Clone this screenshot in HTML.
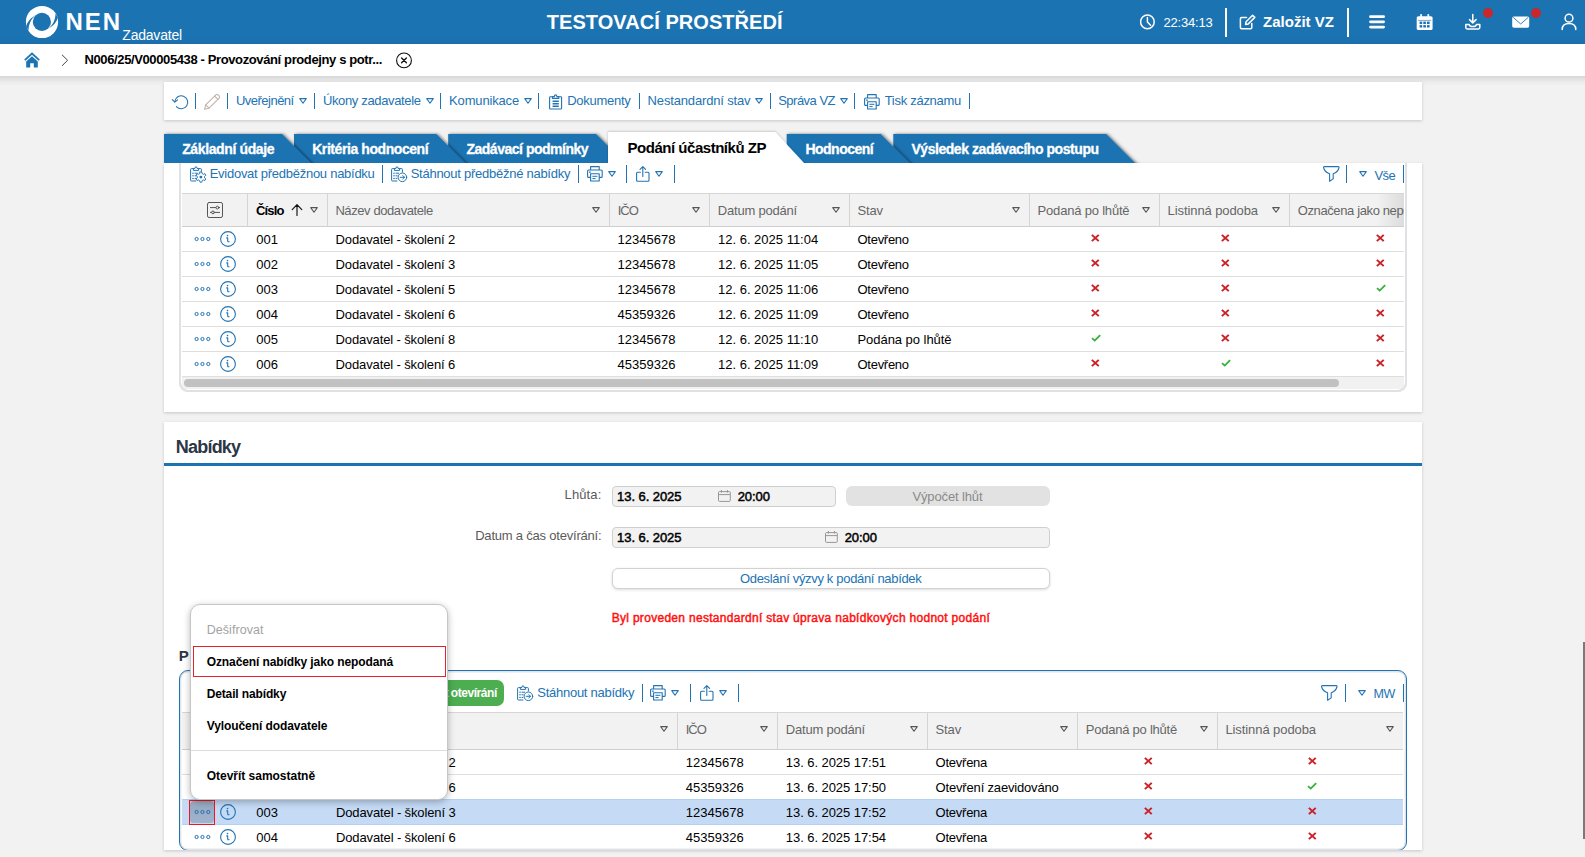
<!DOCTYPE html>
<html lang="cs">
<head>
<meta charset="utf-8">
<title>NEN</title>
<style>
*{box-sizing:border-box;margin:0;padding:0}
html,body{width:1585px;height:857px;overflow:hidden;background:#f2f2f2;font-family:"Liberation Sans",sans-serif;font-size:13px;color:#000}
.abs{position:absolute}
.t{position:absolute;white-space:pre;line-height:1}
svg{position:absolute;overflow:visible}
/* header */
#hdr{position:absolute;left:0;top:0;width:1585px;height:44px;background:#1c73b2;color:#fff}
#crumb{position:absolute;left:-30px;top:44px;width:1645px;height:32px;background:#fff;box-shadow:0 2px 8px rgba(0,0,0,.17)}
.card{position:absolute;left:164px;width:1258px;background:#fff;box-shadow:0 1px 3px rgba(0,0,0,.18)}
.lnk{color:#2273b3}
.sep{position:absolute;width:1px;background:#2273b3}
/*STYLE-MORE*/
</style>
</head>
<body>
<svg width="0" height="0" style="left:-10px;top:-10px">
<defs>

<symbol id="tri" viewBox="0 0 8 6" overflow="visible"><path d="M.7 .6H7.3L4 5.3Z" fill="none" stroke="currentColor" stroke-width="1.05" stroke-linejoin="round"/></symbol>
<symbol id="xm" viewBox="0 0 10 10" overflow="visible"><path d="M1 1L9 9M9 1L1 9" fill="none" stroke="#cb2128" stroke-width="2.3" stroke-linecap="butt"/></symbol>
<symbol id="ck" viewBox="0 0 12 10" overflow="visible"><path d="M1.2 5.4L4.4 8.5L10.8 1.4" fill="none" stroke="#35b139" stroke-width="2.1" stroke-linecap="butt" stroke-linejoin="miter"/></symbol>
<symbol id="ooo" viewBox="0 0 17 6" overflow="visible"><g fill="none" stroke="#2273b3" stroke-width="1"><circle cx="2.6" cy="3" r="1.6"/><circle cx="8.45" cy="3" r="1.6"/><circle cx="14.3" cy="3" r="1.6"/></g></symbol>
<symbol id="inf" viewBox="0 0 16 16" overflow="visible"><circle cx="8" cy="8" r="7.4" fill="none" stroke="#2273b3" stroke-width="1.1"/><path d="M6.7 6.9H7.7V9.9Q7.8 11 9.1 10.7" fill="none" stroke="#2273b3" stroke-width="1.1" stroke-linecap="round" stroke-linejoin="round"/><circle cx="7.5" cy="4.6" r=".8" fill="#2273b3"/></symbol>

</defs>
</svg>

<!-- ============ HEADER ============ -->
<div id="hdr">

<!-- logo -->
<svg style="left:26px;top:6px" width="32" height="32" viewBox="26 6 32 32">
  <circle cx="42" cy="22" r="16.1" fill="#fff"/>
  <circle cx="41.9" cy="21.9" r="9.1" fill="#1c73b2"/>
  <path d="M35.2 15.6 Q28.2 19.5 26.1 26.2 L28.4 30.4 Q28.6 21.5 35.2 15.6Z" fill="#1c73b2"/>
  <path d="M48.8 28.4 Q55.8 24.5 57.9 17.8 L55.6 13.6 Q55.4 22.5 48.8 28.4Z" fill="#1c73b2"/>
</svg>
<span class="t" style="left:65.5px;top:9.7px;font-size:24px;font-weight:700;letter-spacing:2px">NEN</span>
<span class="t" style="left:122.3px;top:27.8px;font-size:14px;letter-spacing:-.21px">Zadavatel</span>
<span class="t" style="left:546.8px;top:12.3px;font-size:20px;font-weight:700;letter-spacing:.05px">TESTOVACÍ PROSTŘEDÍ</span>
<!-- clock -->
<svg style="left:1139px;top:13px" width="18" height="18" viewBox="1139 13 18 18" fill="none" stroke="#fff" stroke-width="1.5" stroke-linecap="round" stroke-linejoin="round">
  <circle cx="1147.4" cy="21.9" r="6.8"/>
  <path d="M1147.4 17.6V22L1150.6 25.2"/>
</svg>
<span class="t" style="left:1163.4px;top:15.8px;font-size:13px;letter-spacing:-.17px">22:34:13</span>
<div class="abs" style="left:1225px;top:8px;width:2px;height:28.5px;background:#fff"></div>
<!-- edit -->
<svg style="left:1238px;top:13px" width="20" height="18" viewBox="1238 13 20 18" fill="none" stroke="#fff" stroke-width="1.5" stroke-linecap="round" stroke-linejoin="round">
  <path d="M1246.5 17.6H1241.6Q1240.4 17.6 1240.4 18.8V27.6Q1240.4 28.8 1241.6 28.8H1250.6Q1251.8 28.8 1251.8 27.6V23.4"/>
  <path d="M1252.6 15.2 L1254.8 17.4 L1248.3 23.9 L1245.6 24.4 L1246.1 21.7Z"/>
</svg>
<span class="t" style="left:1263px;top:14.1px;font-size:15px;font-weight:700;letter-spacing:.02px">Založit VZ</span>
<div class="abs" style="left:1347px;top:8px;width:2px;height:28.5px;background:#fff"></div>
<!-- hamburger -->
<svg style="left:1369px;top:14px" width="16" height="16" viewBox="1369 14 16 16" fill="none" stroke="#fff" stroke-width="2.8" stroke-linecap="round">
  <path d="M1370.5 16.7H1383.6M1370.5 21.8H1383.6M1370.5 27.1H1383.6"/>
</svg>
<!-- calendar -->
<svg style="left:1416px;top:13px" width="18" height="18" viewBox="1416 13 18 18">
  <rect x="1416.7" y="16.2" width="15.9" height="13.8" rx="1.6" fill="#fff"/>
  <rect x="1420.2" y="14" width="1.8" height="4.5" rx=".8" fill="#fff"/>
  <rect x="1427.4" y="14" width="1.8" height="4.5" rx=".8" fill="#fff"/>
  <rect x="1418.2" y="19.9" width="12.9" height="1.1" fill="#1c73b2" opacity=".55"/>
  <g fill="#1c73b2">
    <rect x="1419.6" y="21.6" width="2.6" height="2.4"/><rect x="1423.3" y="21.6" width="2.6" height="2.4"/><rect x="1427" y="21.6" width="2.6" height="2.4"/>
    <rect x="1419.6" y="25.1" width="2.6" height="2.4"/><rect x="1423.3" y="25.1" width="2.6" height="2.4"/><rect x="1427" y="25.1" width="2.6" height="2.4"/>
  </g>
</svg>
<!-- download -->
<svg style="left:1464px;top:13px" width="18" height="18" viewBox="1464 13 18 18" fill="none" stroke="#fff" stroke-width="1.5" stroke-linecap="round" stroke-linejoin="round">
  <path d="M1472.8 14.6V22.6M1469.5 19.6L1472.8 22.9L1476.1 19.6"/>
  <path d="M1465.8 24.6H1469.2Q1469.6 26.6 1472.8 26.6Q1476 26.6 1476.4 24.6H1479.8V27.6Q1479.8 29 1478.4 29H1467.2Q1465.8 29 1465.8 27.6Z"/>
</svg>
<div class="abs" style="left:1483px;top:7.9px;width:10px;height:10px;border-radius:50%;background:#c8282c"></div>
<!-- mail -->
<svg style="left:1512px;top:16px" width="18" height="13" viewBox="1512 16 18 13">
  <rect x="1512.2" y="16.4" width="17" height="11.3" rx="1.6" fill="#fff"/>
  <path d="M1513.2 17.4L1520.7 24L1528.2 17.4" fill="none" stroke="#1c73b2" stroke-width=".9"/>
</svg>
<div class="abs" style="left:1531px;top:7.9px;width:10px;height:10px;border-radius:50%;background:#c8282c"></div>
<!-- user -->
<svg style="left:1560px;top:13px" width="18" height="18" viewBox="1560 13 18 18" fill="none" stroke="#fff" stroke-width="1.5" stroke-linecap="round">
  <circle cx="1569" cy="18.2" r="3.9"/>
  <path d="M1562.2 29.4Q1562.2 23.4 1569 23.4Q1575.8 23.4 1575.8 29.4"/>
</svg>

</div>

<!-- ============ BREADCRUMB ============ -->
<div id="crumb">

<!-- home -->
<svg style="left:53px;top:7px" width="18" height="18" viewBox="23 51 18 18">
  <path d="M32 52.2L24.2 59.6L25.4 60.8L32 54.7L38.6 60.8L39.8 59.6Z" fill="#1c73b2"/>
  <path d="M32 56.2L26.2 61.6V67.6H30.2V63.2H33.8V67.6H37.8V61.6Z" fill="#1c73b2"/>
</svg>
<svg style="left:90px;top:9px" width="10" height="14" viewBox="60 53 10 14" fill="none" stroke="#444" stroke-width="1">
  <path d="M62 54.8L67.6 60.3L62 65.8"/>
</svg>
<span class="t" style="left:114.5px;top:9.2px;font-size:13px;font-weight:700;letter-spacing:-.38px">N006/25/V00005438 - Provozování prodejny s potr...</span>
<svg style="left:425px;top:7px" width="18" height="18" viewBox="395 51 18 18" fill="none" stroke="#111" stroke-width="1.1" stroke-linecap="round">
  <circle cx="404" cy="60.4" r="7.4"/>
  <path d="M401.6 58L406.4 62.8M406.4 58L401.6 62.8" stroke-width="1.3"/>
</svg>

</div>

<!-- CARD 1 -->
<div class="card" id="card1" style="top:82px;height:38.4px"></div>
<div class="abs" style="left:0;top:0">
<svg style="left:171px;top:93px" width="19" height="18" viewBox="171 93 19 18" fill="none" stroke="#2273b3" stroke-width="1.1" stroke-linecap="round" stroke-linejoin="round">
<path d="M174.8 101.6A6.5 6.5 0 1 1 176.4 106.6"/><path d="M172.3 99.6L174.8 102.2L177.6 99.8"/></svg>
<div class="abs" style="left:195px;top:92.8px;width:1px;height:16.6px;background:#2273b3"></div>
<svg style="left:203px;top:93px" width="19" height="18" viewBox="203 93 19 18" fill="none" stroke="#c2b4ab" stroke-width="1.1" stroke-linecap="round" stroke-linejoin="round">
<path d="M204.6 109.2L205.7 104.9L215.9 94.8Q217 93.9 218.1 94.9L219.2 96Q220.2 97.1 219.2 98.2L209 108.2Z"/><path d="M205.7 104.9L209 108.2M214.6 96.1L217.9 99.4"/></svg>
<div class="abs" style="left:227px;top:92.8px;width:1px;height:16.6px;background:#2273b3"></div>
<span class="t" style="left:235.9px;top:93.90px;font-size:13px;letter-spacing:-0.507px;color:#2273b3;font-weight:400;">Uveřejnění</span>
<svg style="left:299.1px;top:98.2px;color:#2273b3" width="8" height="6"><use href="#tri"/></svg>
<div class="abs" style="left:314px;top:92.8px;width:1px;height:16.6px;background:#2273b3"></div>
<span class="t" style="left:322.9px;top:93.90px;font-size:13px;letter-spacing:-0.353px;color:#2273b3;font-weight:400;">Úkony zadavatele</span>
<svg style="left:426px;top:98.2px;color:#2273b3" width="8" height="6"><use href="#tri"/></svg>
<div class="abs" style="left:440px;top:92.8px;width:1px;height:16.6px;background:#2273b3"></div>
<span class="t" style="left:449.1px;top:93.90px;font-size:13px;letter-spacing:-0.165px;color:#2273b3;font-weight:400;">Komunikace</span>
<svg style="left:524.4px;top:98.2px;color:#2273b3" width="8" height="6"><use href="#tri"/></svg>
<div class="abs" style="left:538px;top:92.8px;width:1px;height:16.6px;background:#2273b3"></div>
<svg style="left:548px;top:93px" width="16" height="18" viewBox="548 93 16 18" fill="none" stroke="#2273b3" stroke-width="1.1" stroke-linejoin="round">
<path d="M552.4 96.8H550.4Q549.6 96.8 549.6 97.6V108.2Q549.6 109 550.4 109H560.8Q561.6 109 561.6 108.2V97.6Q561.6 96.8 560.8 96.8H558.8"/>
<path d="M552.4 98.4V96.6H554.3Q554.4 94.9 555.6 94.9Q556.8 94.9 556.9 96.6H558.8V98.4Z"/>
<path d="M552.6 101.3H558.8M552.6 103.8H558.8M552.6 106.3H558.8" stroke-width="1.5"/></svg>
<span class="t" style="left:567.2px;top:93.90px;font-size:13px;letter-spacing:-0.261px;color:#2273b3;font-weight:400;">Dokumenty</span>
<div class="abs" style="left:639.3px;top:92.8px;width:1px;height:16.6px;background:#2273b3"></div>
<span class="t" style="left:647.6px;top:93.90px;font-size:13px;letter-spacing:-0.16px;color:#2273b3;font-weight:400;">Nestandardní stav</span>
<svg style="left:755px;top:98.2px;color:#2273b3" width="8" height="6"><use href="#tri"/></svg>
<div class="abs" style="left:769.5px;top:92.8px;width:1px;height:16.6px;background:#2273b3"></div>
<span class="t" style="left:778.2px;top:93.90px;font-size:13px;letter-spacing:-0.514px;color:#2273b3;font-weight:400;">Správa VZ</span>
<svg style="left:839.8px;top:98.2px;color:#2273b3" width="8" height="6"><use href="#tri"/></svg>
<div class="abs" style="left:854px;top:92.8px;width:1px;height:16.6px;background:#2273b3"></div>
<svg style="left:862.8000000000001px;top:92.8px" width="18" height="18" viewBox="863 93 18 18" fill="none" stroke="#2273b3" stroke-width="1.1" stroke-linejoin="round">
<path d="M867.6 98V94.6H876.2V98"/>
<path d="M867.6 105.4H865.6Q864.6 105.4 864.6 104.4V99Q864.6 98 865.6 98H878.2Q879.2 98 879.2 99V104.4Q879.2 105.4 878.2 105.4H876.2"/>
<path d="M867.6 101.8H876.2V109H867.6Z"/><path d="M869.4 104.3H874.4M869.4 106.6H872.6" stroke-width="1"/><path d="M866.4 100.1H867.4" stroke-linecap="round"/></svg>
<span class="t" style="left:884.7px;top:93.90px;font-size:13px;letter-spacing:-0.285px;color:#2273b3;font-weight:400;">Tisk záznamu</span>
<div class="abs" style="left:969px;top:92.8px;width:1px;height:16.6px;background:#2273b3"></div>
</div>
<!-- CARD 2 -->
<div class="card" id="card2" style="top:163px;height:248.5px"></div>
<div class="abs" style="left:0;top:0">
<div class="abs" style="left:179.2px;top:163px;width:1227.4px;height:228.8px;border:2.8px solid #dfe1e4;border-top:none;border-radius:0 0 9px 9px;background:#fff"></div>
<svg style="left:189.6px;top:166px" width="17" height="16" viewBox="0 0 17 16" fill="none" stroke="#2273b3" stroke-width="1" stroke-linejoin="round" stroke-linecap="round">
<path d="M3.4 2.6H1.4Q.6 2.6 .6 3.4V14.2Q.6 15 1.4 15H5.6M8.6 2.6H10.6Q11.4 2.6 11.4 3.4V5.4"/>
<path d="M3.4 4V2.4H5Q5.1 .6 6 .6Q6.9 .6 7 2.4H8.6V4Z"/>
<path d="M2.6 7.2H3.4M5 7.2H7.2M2.6 9.8H3.4M5 9.8H6.2M2.6 12.4H3.4M5 12.4H5.8"/>
<path d="M10.0 6.0L11.8 6.0L12.2 7.6L13.3 8.3L14.9 7.7L15.8 9.3L14.5 10.4L14.5 11.8L15.8 12.9L14.9 14.5L13.3 13.9L12.2 14.6L11.8 16.2L10.0 16.2L9.6 14.6L8.5 13.9L6.9 14.5L6.0 12.9L7.3 11.8L7.3 10.4L6.0 9.3L6.9 7.7L8.5 8.3L9.6 7.6Z" fill="#fff" stroke-width=".95"/>
<circle cx="10.9" cy="11.1" r="1.45" fill="#2273b3" stroke="none"/></svg>
<span class="t" style="left:209.7px;top:166.50px;font-size:13px;letter-spacing:-0.264px;color:#2273b3;font-weight:400;">Evidovat předběžnou nabídku</span>
<div class="abs" style="left:382px;top:165px;width:1px;height:17.6px;background:#2273b3"></div>
<svg style="left:390.7px;top:166px" width="17" height="16" viewBox="0 0 17 16" fill="none" stroke="#2273b3" stroke-width="1" stroke-linejoin="round" stroke-linecap="round">
<path d="M3.4 2.6H1.4Q.6 2.6 .6 3.4V14.2Q.6 15 1.4 15H6M8.6 2.6H10.6Q11.4 2.6 11.4 3.4V6"/>
<path d="M3.4 4V2.4H5Q5.1 .6 6 .6Q6.9 .6 7 2.4H8.6V4Z"/>
<path d="M2.6 7.2H3.4M5 7.2H7.6M2.6 9.8H3.4M5 9.8H6.2M2.6 12.4H3.4M5 12.4H5.8"/>
<circle cx="11.4" cy="11.3" r="4.3" fill="#fff"/>
<path d="M9.2 11.3H13.4M11.8 9.6L13.5 11.3L11.8 13"/></svg>
<span class="t" style="left:410.7px;top:166.50px;font-size:13px;letter-spacing:-0.26px;color:#2273b3;font-weight:400;">Stáhnout předběžné nabídky</span>
<div class="abs" style="left:578px;top:165px;width:1px;height:17.6px;background:#2273b3"></div>
<svg style="left:585.8000000000001px;top:164.79999999999998px" width="18" height="18" viewBox="863 93 18 18" fill="none" stroke="#2273b3" stroke-width="1.1" stroke-linejoin="round">
<path d="M867.6 98V94.6H876.2V98"/>
<path d="M867.6 105.4H865.6Q864.6 105.4 864.6 104.4V99Q864.6 98 865.6 98H878.2Q879.2 98 879.2 99V104.4Q879.2 105.4 878.2 105.4H876.2"/>
<path d="M867.6 101.8H876.2V109H867.6Z"/><path d="M869.4 104.3H874.4M869.4 106.6H872.6" stroke-width="1"/><path d="M866.4 100.1H867.4" stroke-linecap="round"/></svg>
<svg style="left:607.9px;top:171px;color:#2273b3" width="8" height="6"><use href="#tri"/></svg>
<div class="abs" style="left:626.3px;top:165px;width:1px;height:17.6px;background:#2273b3"></div>
<svg style="left:636.2px;top:165.6px" width="14" height="16" viewBox="0 0 14 16" fill="none" stroke="#2273b3" stroke-width="1.1" stroke-linejoin="round" stroke-linecap="round">
<path d="M4.4 6.2H1.6Q.6 6.2 .6 7.2V14.2Q.6 15.2 1.6 15.2H12Q13 15.2 13 14.2V7.2Q13 6.2 12 6.2H9.2"/>
<path d="M6.8 10.4V.8M4 3.4L6.8 .6L9.6 3.4"/></svg>
<svg style="left:655.2px;top:171px;color:#2273b3" width="8" height="6"><use href="#tri"/></svg>
<div class="abs" style="left:674px;top:165px;width:1px;height:17.6px;background:#2273b3"></div>
<svg style="left:1322.6px;top:166px" width="17" height="16" viewBox="0 0 17 16" fill="none" stroke="#2273b3" stroke-width="1.1" stroke-linejoin="round" stroke-linecap="round">
<path d="M1.5 .6H15.1Q16.5 .6 15.9 2Q14.9 6 10.2 7.7V12.9L6.6 15.3V7.7Q1.7 6 .7 2Q.1 .6 1.5 .6Z"/></svg>
<div class="abs" style="left:1346px;top:165px;width:1px;height:17.6px;background:#2273b3"></div>
<svg style="left:1358.9px;top:171.3px;color:#2273b3" width="8" height="6"><use href="#tri"/></svg>
<span class="t" style="left:1374.4px;top:168.60px;font-size:13px;letter-spacing:-0.469px;color:#2273b3;font-weight:400;">Vše</span>
<div class="abs" style="left:1403px;top:165px;width:1.4px;height:17.6px;background:#2273b3"></div>
<div class="abs" style="left:182px;top:193px;width:1222.2px;height:34px;background:#f2f2f2;border-top:1px solid #d6d6d6;border-bottom:1px solid #cfcfcf"></div>
<div class="abs" style="left:247px;top:194px;width:1px;height:32px;background:#d4d4d4"></div>
<div class="abs" style="left:327px;top:194px;width:1px;height:32px;background:#d4d4d4"></div>
<div class="abs" style="left:609px;top:194px;width:1px;height:32px;background:#d4d4d4"></div>
<div class="abs" style="left:709px;top:194px;width:1px;height:32px;background:#d4d4d4"></div>
<div class="abs" style="left:849px;top:194px;width:1px;height:32px;background:#d4d4d4"></div>
<div class="abs" style="left:1029px;top:194px;width:1px;height:32px;background:#d4d4d4"></div>
<div class="abs" style="left:1159px;top:194px;width:1px;height:32px;background:#d4d4d4"></div>
<div class="abs" style="left:1289px;top:194px;width:1px;height:32px;background:#d4d4d4"></div>
<div class="abs" style="left:1376px;top:194px;width:28.2px;height:32px;background:linear-gradient(90deg,rgba(0,0,0,0),rgba(0,0,0,.09))"></div>
<svg style="left:207px;top:202px" width="16" height="16" viewBox="0 0 16 16" fill="none" stroke="#555" stroke-width="1" stroke-linecap="round">
<rect x=".5" y=".5" width="15" height="15" rx="1.6"/><path d="M3.4 5.6H12.6M3.4 10.4H12.6"/><circle cx="10.4" cy="5.6" r="1.4" fill="#f2f2f2"/><circle cx="6" cy="10.4" r="1.4" fill="#f2f2f2"/></svg>
<span class="t" style="left:255.9px;top:203.60px;font-size:13px;letter-spacing:-0.799px;color:#000;font-weight:700;">Číslo</span>
<svg style="left:291px;top:204px" width="12" height="12" viewBox="0 0 12 12" fill="none" stroke="#111" stroke-width="1.15" stroke-linecap="round" stroke-linejoin="round"><path d="M6 11.4V.8M1.2 5.6L6 .7L10.8 5.6"/></svg>
<svg style="left:310px;top:207.2px;color:#555" width="8" height="6"><use href="#tri"/></svg>
<span class="t" style="left:335.4px;top:203.60px;font-size:13px;letter-spacing:-0.411px;color:#666;font-weight:400;">Název dodavatele</span>
<svg style="left:592.0px;top:207.2px;color:#555" width="8" height="6"><use href="#tri"/></svg>
<span class="t" style="left:617.7px;top:203.60px;font-size:13px;letter-spacing:-0.942px;color:#666;font-weight:400;">IČO</span>
<svg style="left:691.8px;top:207.2px;color:#555" width="8" height="6"><use href="#tri"/></svg>
<span class="t" style="left:717.8px;top:203.60px;font-size:13px;letter-spacing:-0.214px;color:#666;font-weight:400;">Datum podání</span>
<svg style="left:832.0px;top:207.2px;color:#555" width="8" height="6"><use href="#tri"/></svg>
<span class="t" style="left:857.5px;top:203.60px;font-size:13px;letter-spacing:-0.154px;color:#666;font-weight:400;">Stav</span>
<svg style="left:1012.0px;top:207.2px;color:#555" width="8" height="6"><use href="#tri"/></svg>
<span class="t" style="left:1037.6px;top:203.60px;font-size:13px;letter-spacing:-0.194px;color:#666;font-weight:400;">Podaná po lhůtě</span>
<svg style="left:1142.1px;top:207.2px;color:#555" width="8" height="6"><use href="#tri"/></svg>
<span class="t" style="left:1167.6px;top:203.60px;font-size:13px;letter-spacing:-0.094px;color:#666;font-weight:400;">Listinná podoba</span>
<svg style="left:1272.1px;top:207.2px;color:#555" width="8" height="6"><use href="#tri"/></svg>
<div class="abs" style="left:1290px;top:194px;width:114.2px;height:32px;overflow:hidden"><span class="t" style="left:7.7px;top:9.60px;font-size:13px;letter-spacing:-0.378px;color:#666;font-weight:400;">Označena jako nepodaná</span></div>
<svg style="left:193.6px;top:235.8px" width="17" height="6"><use href="#ooo"/></svg>
<svg style="left:220px;top:230.8px" width="16" height="16"><use href="#inf"/></svg>
<span class="t" style="left:256.2px;top:232.70px;font-size:13px;letter-spacing:0px;color:#000;font-weight:400;">001</span>
<span class="t" style="left:335.6px;top:232.70px;font-size:13px;letter-spacing:-0.125px;color:#000;font-weight:400;">Dodavatel - školení 2</span>
<span class="t" style="left:617.6px;top:232.70px;font-size:13px;letter-spacing:0.02px;color:#000;font-weight:400;">12345678</span>
<span class="t" style="left:718.0px;top:232.70px;font-size:13px;letter-spacing:-0.003px;color:#000;font-weight:400;">12. 6. 2025 11:04</span>
<span class="t" style="left:857.5px;top:232.70px;font-size:13px;letter-spacing:-0.273px;color:#000;font-weight:400;">Otevřeno</span>
<svg style="left:1091.4px;top:234.2px" width="8.6" height="7.8" viewBox="0 0 10 10" preserveAspectRatio="none"><use href="#xm"/></svg>
<svg style="left:1221.2px;top:234.2px" width="8.6" height="7.8" viewBox="0 0 10 10" preserveAspectRatio="none"><use href="#xm"/></svg>
<svg style="left:1376.1px;top:234.2px" width="8.6" height="7.8" viewBox="0 0 10 10" preserveAspectRatio="none"><use href="#xm"/></svg>
<div class="abs" style="left:182px;top:251px;width:1222.2px;height:1px;background:#dedede"></div>
<svg style="left:193.6px;top:260.8px" width="17" height="6"><use href="#ooo"/></svg>
<svg style="left:220px;top:255.8px" width="16" height="16"><use href="#inf"/></svg>
<span class="t" style="left:256.2px;top:257.70px;font-size:13px;letter-spacing:0px;color:#000;font-weight:400;">002</span>
<span class="t" style="left:335.6px;top:257.70px;font-size:13px;letter-spacing:-0.125px;color:#000;font-weight:400;">Dodavatel - školení 3</span>
<span class="t" style="left:617.6px;top:257.70px;font-size:13px;letter-spacing:0.02px;color:#000;font-weight:400;">12345678</span>
<span class="t" style="left:718.0px;top:257.70px;font-size:13px;letter-spacing:-0.003px;color:#000;font-weight:400;">12. 6. 2025 11:05</span>
<span class="t" style="left:857.5px;top:257.70px;font-size:13px;letter-spacing:-0.273px;color:#000;font-weight:400;">Otevřeno</span>
<svg style="left:1091.4px;top:259.2px" width="8.6" height="7.8" viewBox="0 0 10 10" preserveAspectRatio="none"><use href="#xm"/></svg>
<svg style="left:1221.2px;top:259.2px" width="8.6" height="7.8" viewBox="0 0 10 10" preserveAspectRatio="none"><use href="#xm"/></svg>
<svg style="left:1376.1px;top:259.2px" width="8.6" height="7.8" viewBox="0 0 10 10" preserveAspectRatio="none"><use href="#xm"/></svg>
<div class="abs" style="left:182px;top:276px;width:1222.2px;height:1px;background:#dedede"></div>
<svg style="left:193.6px;top:285.8px" width="17" height="6"><use href="#ooo"/></svg>
<svg style="left:220px;top:280.8px" width="16" height="16"><use href="#inf"/></svg>
<span class="t" style="left:256.2px;top:282.70px;font-size:13px;letter-spacing:0px;color:#000;font-weight:400;">003</span>
<span class="t" style="left:335.6px;top:282.70px;font-size:13px;letter-spacing:-0.125px;color:#000;font-weight:400;">Dodavatel - školení 5</span>
<span class="t" style="left:617.6px;top:282.70px;font-size:13px;letter-spacing:0.02px;color:#000;font-weight:400;">12345678</span>
<span class="t" style="left:718.0px;top:282.70px;font-size:13px;letter-spacing:-0.003px;color:#000;font-weight:400;">12. 6. 2025 11:06</span>
<span class="t" style="left:857.5px;top:282.70px;font-size:13px;letter-spacing:-0.273px;color:#000;font-weight:400;">Otevřeno</span>
<svg style="left:1091.4px;top:284.2px" width="8.6" height="7.8" viewBox="0 0 10 10" preserveAspectRatio="none"><use href="#xm"/></svg>
<svg style="left:1221.2px;top:284.2px" width="8.6" height="7.8" viewBox="0 0 10 10" preserveAspectRatio="none"><use href="#xm"/></svg>
<svg style="left:1375.7px;top:284.2px" width="10.2" height="7.8" viewBox="0 0 12 10" preserveAspectRatio="none"><use href="#ck"/></svg>
<div class="abs" style="left:182px;top:301px;width:1222.2px;height:1px;background:#dedede"></div>
<svg style="left:193.6px;top:310.8px" width="17" height="6"><use href="#ooo"/></svg>
<svg style="left:220px;top:305.8px" width="16" height="16"><use href="#inf"/></svg>
<span class="t" style="left:256.2px;top:307.70px;font-size:13px;letter-spacing:0px;color:#000;font-weight:400;">004</span>
<span class="t" style="left:335.6px;top:307.70px;font-size:13px;letter-spacing:-0.125px;color:#000;font-weight:400;">Dodavatel - školení 6</span>
<span class="t" style="left:617.6px;top:307.70px;font-size:13px;letter-spacing:0.02px;color:#000;font-weight:400;">45359326</span>
<span class="t" style="left:718.0px;top:307.70px;font-size:13px;letter-spacing:-0.003px;color:#000;font-weight:400;">12. 6. 2025 11:09</span>
<span class="t" style="left:857.5px;top:307.70px;font-size:13px;letter-spacing:-0.273px;color:#000;font-weight:400;">Otevřeno</span>
<svg style="left:1091.4px;top:309.2px" width="8.6" height="7.8" viewBox="0 0 10 10" preserveAspectRatio="none"><use href="#xm"/></svg>
<svg style="left:1221.2px;top:309.2px" width="8.6" height="7.8" viewBox="0 0 10 10" preserveAspectRatio="none"><use href="#xm"/></svg>
<svg style="left:1376.1px;top:309.2px" width="8.6" height="7.8" viewBox="0 0 10 10" preserveAspectRatio="none"><use href="#xm"/></svg>
<div class="abs" style="left:182px;top:326px;width:1222.2px;height:1px;background:#dedede"></div>
<svg style="left:193.6px;top:335.8px" width="17" height="6"><use href="#ooo"/></svg>
<svg style="left:220px;top:330.8px" width="16" height="16"><use href="#inf"/></svg>
<span class="t" style="left:256.2px;top:332.70px;font-size:13px;letter-spacing:0px;color:#000;font-weight:400;">005</span>
<span class="t" style="left:335.6px;top:332.70px;font-size:13px;letter-spacing:-0.125px;color:#000;font-weight:400;">Dodavatel - školení 8</span>
<span class="t" style="left:617.6px;top:332.70px;font-size:13px;letter-spacing:0.02px;color:#000;font-weight:400;">12345678</span>
<span class="t" style="left:718.0px;top:332.70px;font-size:13px;letter-spacing:-0.003px;color:#000;font-weight:400;">12. 6. 2025 11:10</span>
<span class="t" style="left:857.5px;top:332.70px;font-size:13px;letter-spacing:-0.047px;color:#000;font-weight:400;">Podána po lhůtě</span>
<svg style="left:1091.0px;top:334.2px" width="10.2" height="7.8" viewBox="0 0 12 10" preserveAspectRatio="none"><use href="#ck"/></svg>
<svg style="left:1221.2px;top:334.2px" width="8.6" height="7.8" viewBox="0 0 10 10" preserveAspectRatio="none"><use href="#xm"/></svg>
<svg style="left:1376.1px;top:334.2px" width="8.6" height="7.8" viewBox="0 0 10 10" preserveAspectRatio="none"><use href="#xm"/></svg>
<div class="abs" style="left:182px;top:351px;width:1222.2px;height:1px;background:#dedede"></div>
<svg style="left:193.6px;top:360.8px" width="17" height="6"><use href="#ooo"/></svg>
<svg style="left:220px;top:355.8px" width="16" height="16"><use href="#inf"/></svg>
<span class="t" style="left:256.2px;top:357.70px;font-size:13px;letter-spacing:0px;color:#000;font-weight:400;">006</span>
<span class="t" style="left:335.6px;top:357.70px;font-size:13px;letter-spacing:-0.125px;color:#000;font-weight:400;">Dodavatel - školení 6</span>
<span class="t" style="left:617.6px;top:357.70px;font-size:13px;letter-spacing:0.02px;color:#000;font-weight:400;">45359326</span>
<span class="t" style="left:718.0px;top:357.70px;font-size:13px;letter-spacing:-0.003px;color:#000;font-weight:400;">12. 6. 2025 11:09</span>
<span class="t" style="left:857.5px;top:357.70px;font-size:13px;letter-spacing:-0.273px;color:#000;font-weight:400;">Otevřeno</span>
<svg style="left:1091.4px;top:359.2px" width="8.6" height="7.8" viewBox="0 0 10 10" preserveAspectRatio="none"><use href="#xm"/></svg>
<svg style="left:1220.8px;top:359.2px" width="10.2" height="7.8" viewBox="0 0 12 10" preserveAspectRatio="none"><use href="#ck"/></svg>
<svg style="left:1376.1px;top:359.2px" width="8.6" height="7.8" viewBox="0 0 10 10" preserveAspectRatio="none"><use href="#xm"/></svg>
<div class="abs" style="left:182px;top:376px;width:1222.2px;height:1px;background:#dedede"></div>
<div class="abs" style="left:182px;top:377px;width:1222.2px;height:11.6px;background:#f1f1f1"></div>
<div class="abs" style="left:183.7px;top:379px;width:1155.5px;height:8px;border-radius:4px;background:#c1c1c1"></div>
<div class="abs" style="left:179.2px;top:370px;width:1227.4px;height:21.8px;border:2.8px solid #dfe1e4;border-top:none;border-radius:0 0 9px 9px"></div>
</div>
<!-- TABS -->
<svg style="left:0;top:120px;overflow:hidden" width="1585" height="43" viewBox="0 120 1585 43">
<defs><filter id="tsh" x="-5%" y="-30%" width="110%" height="160%"><feDropShadow dx="1.5" dy="0" stdDeviation="1.6" flood-color="#000" flood-opacity=".5"/></filter>
<filter id="tsh2" x="-5%" y="-30%" width="110%" height="160%"><feDropShadow dx="0" dy="-.5" stdDeviation=".9" flood-color="#000" flood-opacity=".22"/></filter></defs>
<path d="M893.3 166V134H1106.2L1138.2 166Z" fill="#1c73b2" filter="url(#tsh)"/>
<path d="M786.7 166V134H880.7L912.7 166Z" fill="#1c73b2" filter="url(#tsh)"/>
<path d="M448.2 166V134H596L628 166Z" fill="#1c73b2" filter="url(#tsh)"/>
<path d="M294 166V134H436.4L468.4 166Z" fill="#1c73b2" filter="url(#tsh)"/>
<path d="M164 166V134H282L314 166Z" fill="#1c73b2" filter="url(#tsh)"/>
<path d="M608 166V132H775.3L806.8 166Z" fill="#fff" filter="url(#tsh2)"/>
</svg>
<div class="abs" style="left:0;top:0">
<span class="t" style="left:182.2px;top:142.05px;font-size:14px;font-weight:700;color:#fff;-webkit-text-stroke:.3px #fff;letter-spacing:-0.375px">Základní údaje</span>
<span class="t" style="left:312.2px;top:142.05px;font-size:14px;font-weight:700;color:#fff;-webkit-text-stroke:.3px #fff;letter-spacing:-0.427px">Kritéria hodnocení</span>
<span class="t" style="left:466.4px;top:142.05px;font-size:14px;font-weight:700;color:#fff;-webkit-text-stroke:.3px #fff;letter-spacing:-0.479px">Zadávací podmínky</span>
<span class="t" style="left:805.4000000000001px;top:142.05px;font-size:14px;font-weight:700;color:#fff;-webkit-text-stroke:.3px #fff;letter-spacing:-0.505px">Hodnocení</span>
<span class="t" style="left:911.4000000000001px;top:142.05px;font-size:14px;font-weight:700;color:#fff;-webkit-text-stroke:.3px #fff;letter-spacing:-0.443px">Výsledek zadávacího postupu</span>
<span class="t" style="left:627.5px;top:139.90px;font-size:15px;font-weight:700;color:#000;letter-spacing:-0.475px">Podání účastníků ZP</span>
</div>
<!-- CARD 3 -->
<div class="card" id="card3" style="top:422px;height:428px"></div>
<div class="abs" style="left:0;top:0">
<span class="t" style="left:175.8px;top:437.86px;font-size:18px;letter-spacing:-0.79px;color:#2c3644;font-weight:700;">Nabídky</span>
<div class="abs" style="left:164px;top:463px;width:1258px;height:3px;background:#1c73b2"></div>
<span class="t" style="left:564.6px;top:487.90px;font-size:13px;letter-spacing:0.107px;color:#5a5a5a;font-weight:400;">Lhůta:</span>
<span class="t" style="left:475.2px;top:528.90px;font-size:13px;letter-spacing:-0.208px;color:#5a5a5a;font-weight:400;">Datum a čas otevírání:</span>
<div class="abs" style="left:612px;top:486px;width:224px;height:21px;background:#f2f2f2;border:1px solid #cfcfcf;border-radius:4px"></div>
<span class="t" style="left:617.1px;top:489.90px;font-size:13px;letter-spacing:-0.069px;color:#000;font-weight:400;-webkit-text-stroke:.5px #000;">13. 6. 2025</span>
<svg style="left:717.8px;top:490px" width="13" height="12" viewBox="0 0 13 12" fill="none" stroke="#9a9498" stroke-width="1"><rect x=".5" y="1.6" width="11.8" height="9.8" rx="1"/><path d="M.5 4.6H12.3M3.4 0V2.6M9.4 0V2.6"/></svg>
<span class="t" style="left:737.7px;top:489.90px;font-size:13px;letter-spacing:-0.049px;color:#000;font-weight:400;-webkit-text-stroke:.5px #000;">20:00</span>
<div class="abs" style="left:846px;top:486px;width:204px;height:20px;background:#e2e2e2;border-radius:6px"></div>
<span class="t" style="left:912.4px;top:489.60px;font-size:13px;letter-spacing:-0.129px;color:#8a8a8a;font-weight:400;">Výpočet lhůt</span>
<div class="abs" style="left:612px;top:527px;width:438px;height:21px;background:#f2f2f2;border:1px solid #cfcfcf;border-radius:4px"></div>
<span class="t" style="left:617.1px;top:530.90px;font-size:13px;letter-spacing:-0.069px;color:#000;font-weight:400;-webkit-text-stroke:.5px #000;">13. 6. 2025</span>
<svg style="left:824.6px;top:531px" width="13" height="12" viewBox="0 0 13 12" fill="none" stroke="#9a9498" stroke-width="1"><rect x=".5" y="1.6" width="11.8" height="9.8" rx="1"/><path d="M.5 4.6H12.3M3.4 0V2.6M9.4 0V2.6"/></svg>
<span class="t" style="left:844.7px;top:530.90px;font-size:13px;letter-spacing:-0.049px;color:#000;font-weight:400;-webkit-text-stroke:.5px #000;">20:00</span>
<div class="abs" style="left:612px;top:568px;width:438px;height:21px;background:#fff;border:1px solid #d2d2d2;border-radius:6px;box-shadow:0 1px 3px rgba(0,0,0,.14)"></div>
<span class="t" style="left:740.0px;top:571.80px;font-size:13px;letter-spacing:-0.326px;color:#2273b3;font-weight:400;">Odeslání výzvy k podání nabídek</span>
<span class="t" style="left:611.7px;top:612.24px;font-size:12px;letter-spacing:0.299px;color:#ff0f0f;font-weight:400;-webkit-text-stroke:.45px #ff0f0f;">Byl proveden nestandardní stav úprava nabídkových hodnot podání</span>
<div class="abs" style="left:176px;top:645px;width:14.4px;height:20px;overflow:hidden"><span class="t" style="left:2.7px;top:3.20px;font-size:15px;letter-spacing:0px;color:#2c3644;font-weight:700;">P</span></div>
<div class="abs" style="left:170px;top:660px;width:1250px;height:189.7px;overflow:hidden"><div class="abs" style="left:9.4px;top:10.2px;width:1227.4px;height:181.2px;border:1.6px solid #2273b3;border-radius:9px;background:#fff;box-shadow:inset 0 0 0 1.4px #e1e4e8"></div></div>
<div class="abs" style="left:330px;top:679.6px;width:174.2px;height:26.4px;background:#4cae50;border-radius:7px"></div>
<div class="abs" style="left:300px;top:686.54px;width:196.8px;text-align:right;font-size:12px;line-height:1;font-weight:700;color:#fff;letter-spacing:-.45px;white-space:pre">Evidovat otevírání</div>
<svg style="left:516.8px;top:685.4px" width="17" height="16" viewBox="0 0 17 16" fill="none" stroke="#2273b3" stroke-width="1" stroke-linejoin="round" stroke-linecap="round">
<path d="M3.4 2.6H1.4Q.6 2.6 .6 3.4V14.2Q.6 15 1.4 15H6M8.6 2.6H10.6Q11.4 2.6 11.4 3.4V6"/>
<path d="M3.4 4V2.4H5Q5.1 .6 6 .6Q6.9 .6 7 2.4H8.6V4Z"/>
<path d="M2.6 7.2H3.4M5 7.2H7.6M2.6 9.8H3.4M5 9.8H6.2M2.6 12.4H3.4M5 12.4H5.8"/>
<circle cx="11.4" cy="11.3" r="4.3" fill="#fff"/>
<path d="M9.2 11.3H13.4M11.8 9.6L13.5 11.3L11.8 13"/></svg>
<span class="t" style="left:537.3px;top:685.90px;font-size:13px;letter-spacing:-0.269px;color:#2273b3;font-weight:400;">Stáhnout nabídky</span>
<div class="abs" style="left:642px;top:684.2px;width:1px;height:17.6px;background:#2273b3"></div>
<svg style="left:649.4px;top:683.8000000000001px" width="18" height="18" viewBox="863 93 18 18" fill="none" stroke="#2273b3" stroke-width="1.1" stroke-linejoin="round">
<path d="M867.6 98V94.6H876.2V98"/>
<path d="M867.6 105.4H865.6Q864.6 105.4 864.6 104.4V99Q864.6 98 865.6 98H878.2Q879.2 98 879.2 99V104.4Q879.2 105.4 878.2 105.4H876.2"/>
<path d="M867.6 101.8H876.2V109H867.6Z"/><path d="M869.4 104.3H874.4M869.4 106.6H872.6" stroke-width="1"/><path d="M866.4 100.1H867.4" stroke-linecap="round"/></svg>
<svg style="left:671.4px;top:690.2px;color:#2273b3" width="8" height="6"><use href="#tri"/></svg>
<div class="abs" style="left:689.8px;top:684.2px;width:1px;height:17.6px;background:#2273b3"></div>
<svg style="left:700px;top:684.7px" width="14" height="16" viewBox="0 0 14 16" fill="none" stroke="#2273b3" stroke-width="1.1" stroke-linejoin="round" stroke-linecap="round">
<path d="M4.4 6.2H1.6Q.6 6.2 .6 7.2V14.2Q.6 15.2 1.6 15.2H12Q13 15.2 13 14.2V7.2Q13 6.2 12 6.2H9.2"/>
<path d="M6.8 10.4V.8M4 3.4L6.8 .6L9.6 3.4"/></svg>
<svg style="left:718.8px;top:690.2px;color:#2273b3" width="8" height="6"><use href="#tri"/></svg>
<div class="abs" style="left:738px;top:684.2px;width:1px;height:17.6px;background:#2273b3"></div>
<svg style="left:1321px;top:685px" width="17" height="16" viewBox="0 0 17 16" fill="none" stroke="#2273b3" stroke-width="1.1" stroke-linejoin="round" stroke-linecap="round">
<path d="M1.5 .6H15.1Q16.5 .6 15.9 2Q14.9 6 10.2 7.7V12.9L6.6 15.3V7.7Q1.7 6 .7 2Q.1 .6 1.5 .6Z"/></svg>
<div class="abs" style="left:1345px;top:684.2px;width:1px;height:17.6px;background:#2273b3"></div>
<svg style="left:1357.7px;top:690.2px;color:#2273b3" width="8" height="6"><use href="#tri"/></svg>
<span class="t" style="left:1373.4px;top:687.92px;font-size:12.5px;letter-spacing:-0.309px;color:#2273b3;font-weight:400;">MW</span>
<div class="abs" style="left:1402.8px;top:684.2px;width:1.5px;height:17.6px;background:#2273b3"></div>
<div class="abs" style="left:182px;top:712px;width:1221.4px;height:37.5px;background:#f2f2f2;border-top:1px solid #d6d6d6;border-bottom:1px solid #cfcfcf"></div>
<div class="abs" style="left:247px;top:713px;width:1px;height:35.5px;background:#d4d4d4"></div>
<div class="abs" style="left:327px;top:713px;width:1px;height:35.5px;background:#d4d4d4"></div>
<div class="abs" style="left:677px;top:713px;width:1px;height:35.5px;background:#d4d4d4"></div>
<div class="abs" style="left:777px;top:713px;width:1px;height:35.5px;background:#d4d4d4"></div>
<div class="abs" style="left:927px;top:713px;width:1px;height:35.5px;background:#d4d4d4"></div>
<div class="abs" style="left:1077px;top:713px;width:1px;height:35.5px;background:#d4d4d4"></div>
<div class="abs" style="left:1217px;top:713px;width:1px;height:35.5px;background:#d4d4d4"></div>
<span class="t" style="left:685.7px;top:722.60px;font-size:13px;letter-spacing:-0.942px;color:#666;font-weight:400;">IČO</span>
<svg style="left:759.9px;top:726.4px;color:#555" width="8" height="6"><use href="#tri"/></svg>
<span class="t" style="left:785.8px;top:722.60px;font-size:13px;letter-spacing:-0.214px;color:#666;font-weight:400;">Datum podání</span>
<svg style="left:910.2px;top:726.4px;color:#555" width="8" height="6"><use href="#tri"/></svg>
<span class="t" style="left:935.6px;top:722.60px;font-size:13px;letter-spacing:-0.154px;color:#666;font-weight:400;">Stav</span>
<svg style="left:1060.0px;top:726.4px;color:#555" width="8" height="6"><use href="#tri"/></svg>
<span class="t" style="left:1085.7px;top:722.60px;font-size:13px;letter-spacing:-0.227px;color:#666;font-weight:400;">Podaná po lhůtě</span>
<svg style="left:1200.1px;top:726.4px;color:#555" width="8" height="6"><use href="#tri"/></svg>
<span class="t" style="left:1225.4px;top:722.60px;font-size:13px;letter-spacing:-0.081px;color:#666;font-weight:400;">Listinná podoba</span>
<svg style="left:1386.0px;top:726.4px;color:#555" width="8" height="6"><use href="#tri"/></svg>
<svg style="left:660.4px;top:726.4px;color:#555" width="8" height="6"><use href="#tri"/></svg>
<svg style="left:193.6px;top:758.8px" width="17" height="6"><use href="#ooo"/></svg>
<svg style="left:220.2px;top:753.8px" width="16" height="16"><use href="#inf"/></svg>
<span class="t" style="left:256.2px;top:755.70px;font-size:13px;letter-spacing:0px;color:#000;font-weight:400;">001</span>
<span class="t" style="left:336.0px;top:755.70px;font-size:13px;letter-spacing:-0.125px;color:#000;font-weight:400;">Dodavatel - školení 2</span>
<span class="t" style="left:685.7px;top:755.70px;font-size:13px;letter-spacing:0.02px;color:#000;font-weight:400;">12345678</span>
<span class="t" style="left:785.8px;top:755.70px;font-size:13px;letter-spacing:-0.059px;color:#000;font-weight:400;">13. 6. 2025 17:51</span>
<span class="t" style="left:935.6px;top:755.70px;font-size:13px;letter-spacing:-0.248px;color:#000;font-weight:400;">Otevřena</span>
<svg style="left:1144.1px;top:757.2px" width="8.6" height="7.8" viewBox="0 0 10 10" preserveAspectRatio="none"><use href="#xm"/></svg>
<svg style="left:1307.5px;top:757.2px" width="8.6" height="7.8" viewBox="0 0 10 10" preserveAspectRatio="none"><use href="#xm"/></svg>
<div class="abs" style="left:182px;top:774px;width:1221.4px;height:1px;background:#dedede"></div>
<svg style="left:193.6px;top:783.8px" width="17" height="6"><use href="#ooo"/></svg>
<svg style="left:220.2px;top:778.8px" width="16" height="16"><use href="#inf"/></svg>
<span class="t" style="left:256.2px;top:780.70px;font-size:13px;letter-spacing:0px;color:#000;font-weight:400;">002</span>
<span class="t" style="left:336.0px;top:780.70px;font-size:13px;letter-spacing:-0.125px;color:#000;font-weight:400;">Dodavatel - školení 6</span>
<span class="t" style="left:685.7px;top:780.70px;font-size:13px;letter-spacing:0.02px;color:#000;font-weight:400;">45359326</span>
<span class="t" style="left:785.8px;top:780.70px;font-size:13px;letter-spacing:-0.059px;color:#000;font-weight:400;">13. 6. 2025 17:50</span>
<span class="t" style="left:935.6px;top:780.70px;font-size:13px;letter-spacing:-0.173px;color:#000;font-weight:400;">Otevření zaevidováno</span>
<svg style="left:1144.1px;top:782.2px" width="8.6" height="7.8" viewBox="0 0 10 10" preserveAspectRatio="none"><use href="#xm"/></svg>
<svg style="left:1307.1px;top:782.2px" width="10.2" height="7.8" viewBox="0 0 12 10" preserveAspectRatio="none"><use href="#ck"/></svg>
<div class="abs" style="left:182px;top:799px;width:1221.4px;height:26px;background:#c4daf5;border-top:1px solid #b3cff2;border-bottom:1px solid #b3cff2"></div>
<div class="abs" style="left:189px;top:800px;width:26px;height:25px;border:1.2px solid #ee1620;background:#c4daf5"></div>
<div class="abs" style="left:190.4px;top:801.2px;width:23.4px;height:22.2px;border-radius:3.5px;background:linear-gradient(#97a8bf,#a2b4cd)"></div>
<svg style="left:193.6px;top:808.5999999999999px" width="17" height="6"><use href="#ooo"/></svg>
<svg style="left:220.2px;top:803.5999999999999px" width="16" height="16"><use href="#inf"/></svg>
<span class="t" style="left:256.2px;top:805.50px;font-size:13px;letter-spacing:0px;color:#000;font-weight:400;">003</span>
<span class="t" style="left:336.0px;top:805.50px;font-size:13px;letter-spacing:-0.125px;color:#000;font-weight:400;">Dodavatel - školení 3</span>
<span class="t" style="left:685.7px;top:805.50px;font-size:13px;letter-spacing:0.02px;color:#000;font-weight:400;">12345678</span>
<span class="t" style="left:785.8px;top:805.50px;font-size:13px;letter-spacing:-0.059px;color:#000;font-weight:400;">13. 6. 2025 17:52</span>
<span class="t" style="left:935.6px;top:805.50px;font-size:13px;letter-spacing:-0.248px;color:#000;font-weight:400;">Otevřena</span>
<svg style="left:1144.1px;top:807.0px" width="8.6" height="7.8" viewBox="0 0 10 10" preserveAspectRatio="none"><use href="#xm"/></svg>
<svg style="left:1307.5px;top:807.0px" width="8.6" height="7.8" viewBox="0 0 10 10" preserveAspectRatio="none"><use href="#xm"/></svg>
<svg style="left:193.6px;top:833.5999999999999px" width="17" height="6"><use href="#ooo"/></svg>
<svg style="left:220.2px;top:828.5999999999999px" width="16" height="16"><use href="#inf"/></svg>
<span class="t" style="left:256.2px;top:830.50px;font-size:13px;letter-spacing:0px;color:#000;font-weight:400;">004</span>
<span class="t" style="left:336.0px;top:830.50px;font-size:13px;letter-spacing:-0.125px;color:#000;font-weight:400;">Dodavatel - školení 6</span>
<span class="t" style="left:685.7px;top:830.50px;font-size:13px;letter-spacing:0.02px;color:#000;font-weight:400;">45359326</span>
<span class="t" style="left:785.8px;top:830.50px;font-size:13px;letter-spacing:-0.059px;color:#000;font-weight:400;">13. 6. 2025 17:54</span>
<span class="t" style="left:935.6px;top:830.50px;font-size:13px;letter-spacing:-0.248px;color:#000;font-weight:400;">Otevřena</span>
<svg style="left:1144.1px;top:832.0px" width="8.6" height="7.8" viewBox="0 0 10 10" preserveAspectRatio="none"><use href="#xm"/></svg>
<svg style="left:1307.5px;top:832.0px" width="8.6" height="7.8" viewBox="0 0 10 10" preserveAspectRatio="none"><use href="#xm"/></svg>
</div>
<!-- MENU -->
<div class="abs" style="left:0;top:0">
<div class="abs" style="left:190.4px;top:604px;width:257.4px;height:196.2px;background:#fff;border:1px solid #c6c6c6;border-radius:10px;box-shadow:0 2px 7px rgba(0,0,0,.28)"></div>
<span class="t" style="left:206.7px;top:624.02px;font-size:12.5px;letter-spacing:0.052px;color:#a3a3a3;font-weight:400;">Dešifrovat</span>
<div class="abs" style="left:193px;top:646px;width:253px;height:31px;border:1.2px solid #e3222b"></div>
<span class="t" style="left:206.7px;top:655.84px;font-size:12px;letter-spacing:-0.1px;color:#000;font-weight:700;">Označení nabídky jako nepodaná</span>
<span class="t" style="left:206.7px;top:687.64px;font-size:12px;letter-spacing:-0.133px;color:#000;font-weight:700;">Detail nabídky</span>
<span class="t" style="left:206.7px;top:719.54px;font-size:12px;letter-spacing:-0.078px;color:#000;font-weight:700;">Vyloučení dodavatele</span>
<div class="abs" style="left:191.4px;top:750px;width:255.4px;height:1px;background:#dcdcdc"></div>
<span class="t" style="left:206.7px;top:769.74px;font-size:12px;letter-spacing:-0.017px;color:#000;font-weight:700;">Otevřít samostatně</span>
</div>
<div class="abs" style="left:1583px;top:642px;width:2px;height:197px;background:#7a7a7a"></div>
</body>
</html>
